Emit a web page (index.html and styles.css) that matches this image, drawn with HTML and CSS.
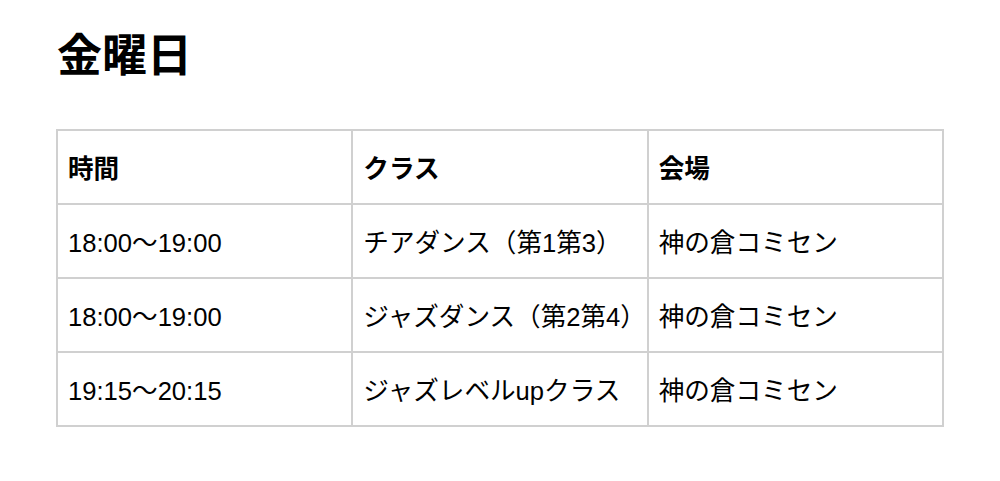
FILE: index.html
```html
<!DOCTYPE html>
<html lang="ja">
<head>
<meta charset="utf-8">
<link rel="stylesheet" href="styles.css">
</head>
<body>
<div class="page">
  <h1 class="title">金曜日</h1>
  <table class="schedule">
    <thead>
      <tr><th>時間</th><th>クラス</th><th>会場</th></tr>
    </thead>
    <tbody>
      <tr><td>18:00～19:00</td><td>チアダンス（第1第3）</td><td>神の倉コミセン</td></tr>
      <tr><td>18:00～19:00</td><td>ジャズダンス（第2第4）</td><td>神の倉コミセン</td></tr>
      <tr><td>19:15～20:15</td><td>ジャズレベルupクラス</td><td>神の倉コミセン</td></tr>
    </tbody>
  </table>
</div>
</body>
</html>
```
FILE: styles.css
```css
html, body {
  margin: 0;
  padding: 0;
  background: #fff;
}
body {
  font-family: "Liberation Sans", "Noto Sans CJK JP", sans-serif;
  color: #000;
}
.page {
  padding: 29px 56px 0 56px;
}
.title {
  margin: 0 0 44px 1px;
  font-size: 45px;
  line-height: 56px;
  font-weight: bold;
}
.schedule {
  border-collapse: collapse;
  width: 888px;
  table-layout: fixed;
  font-size: 25.6px;
}
.schedule th,
.schedule td {
  border: 2px solid #d0d0d0;
  padding: 18px 10px 14px 10px;
  line-height: 40px;
  text-align: left;
  white-space: nowrap;
}
.schedule th {
  font-weight: bold;
}
```
